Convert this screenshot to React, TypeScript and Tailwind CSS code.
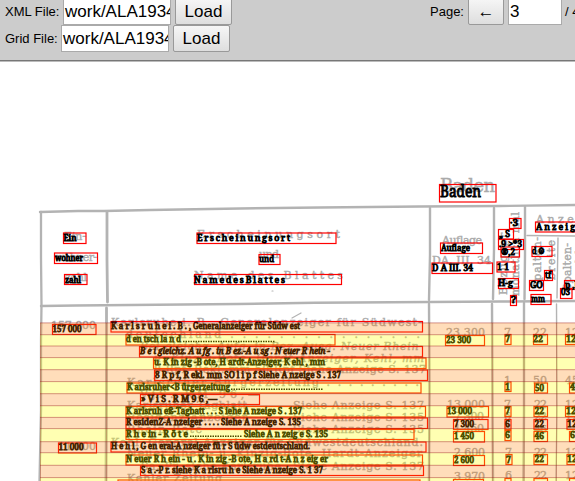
import React from 'react';

type Word = { t: string; x: number; y: number; w: number; box: [number, number, number, number]; s?: number; i?: boolean; spaced?: boolean };

// t: text, x/y: baseline start, w: text width, box: left, top, width, height
const words: Word[] = [
  { t: 'Baden', x: 440, y: 197, w: 41, s: 15.5, box: [439.5, 184.5, 56.5, 17.5] },
  { t: 'Ein', x: 63.5, y: 241, w: 13, box: [63.5, 233, 22.5, 10.5] },
  { t: 'wohner', x: 55, y: 261, w: 28, box: [54.5, 253, 43, 10.5] },
  { t: 'zahl', x: 65, y: 283, w: 16, box: [64.5, 274.5, 22.5, 10] },
  { t: 'Erscheinungsort', x: 197, y: 241, w: 93, spaced: true, box: [197, 233, 139, 10.5] },
  { t: 'und', x: 259, y: 262.5, w: 15, box: [259, 254.5, 21, 10] },
  { t: 'NamedesBlattes', x: 194, y: 283, w: 91, spaced: true, box: [194.5, 274.5, 147, 10] },
  { t: 'Auflage', x: 441, y: 251, w: 29, box: [440.5, 243, 42, 10.5] },
  { t: 'D A III. 34', x: 432, y: 271, w: 41, box: [432, 263, 60.5, 10.5] },
  { t: '·3', x: 510, y: 226, w: 8, box: [509.5, 218.5, 11.5, 10] },
  { t: '„ S', x: 499, y: 237, w: 11, box: [498.5, 229.5, 15, 9.5] },
  { t: '.9 >*3', x: 499, y: 247.5, w: 23, box: [498.5, 239.5, 25, 10] },
  { t: '®,2', x: 501, y: 255, w: 14, box: [501, 247, 18.5, 10] },
  { t: '1 1', x: 497, y: 270, w: 12, box: [497, 262, 18, 10] },
  { t: 'H-g', x: 498, y: 286, w: 15, box: [498.5, 278.5, 20, 10] },
  { t: '?', x: 511, y: 303.5, w: 5, box: [510.5, 295.5, 6, 10] },
  { t: 'Anzeig', x: 536, y: 230, w: 39, spaced: true, box: [535.5, 222, 50, 10] },
  { t: 'd ⚙', x: 532, y: 254.5, w: 13, box: [532, 246.5, 20, 10] },
  { t: 'tf', x: 545, y: 278.5, w: 6, box: [544.5, 270.5, 8, 10] },
  { t: 'GO', x: 530, y: 288.5, w: 13, box: [529.5, 280.5, 14, 10] },
  { t: 'mm', x: 531, y: 302.5, w: 14, box: [531, 294.5, 20, 10] },
  { t: 'p ,l', x: 565, y: 288.5, w: 12, box: [564.5, 280.5, 18, 9] },
  { t: '03', x: 561, y: 295.5, w: 9, box: [560.5, 288.5, 11.5, 10] },

  { t: '157 000', x: 52.5, y: 332, w: 29, box: [52.5, 324.5, 43.5, 10] },
  { t: 'K a r l s r u h e i . B . ,', x: 111, y: 329.5, w: 80, box: [111, 321.5, 311.5, 10.5] },
  { t: 'd en tsch la n d', x: 126, y: 342.5, w: 55, box: [126, 334.5, 209, 10.5] },
  { t: 'B e i gleichz. A u fg . in B ez.-A u sg . N euer R hein -', x: 140, y: 354.5, w: 190, i: true, box: [139.5, 346.5, 283, 10.5] },
  { t: 'u. K in zig -B ote, H ardt-Anzeiger, K ehl , mm', x: 154, y: 365.5, w: 171, box: [153.5, 358, 272.5, 10.5] },
  { t: '8 R p f, R ekl. mm SO l i p f Siehe A nzeige S . 137', x: 155, y: 378, w: 186, box: [154.5, 370, 273, 10.5] },
  { t: 'K arlsruher<B ürgerzeitung', x: 127, y: 390, w: 103, box: [127, 383, 294, 10] },
  { t: '» V i S . R M 9 6 ,—', x: 141, y: 402.5, w: 76, box: [140.5, 394.5, 119, 10] },
  { t: 'K arlsruh eß-Tagbatt . . . S iehe A nzeige S . 137', x: 126, y: 414, w: 176, box: [126, 406.5, 299.5, 10.5] },
  { t: 'R esidenZ-A nzeiger . . . . Siehe A nzeige S. 135', x: 126, y: 425, w: 175, box: [126, 418, 301.5, 10.5] },
  { t: 'R h e in - R ö t e', x: 126, y: 437, w: 62, box: [126, 429.5, 288, 10] },
  { t: 'H e h l , G en eral-A nzeiger fü r S üdw estdeutschland.', x: 111, y: 449.5, w: 199, box: [111, 442, 315, 10] },
  { t: '11 000', x: 58.5, y: 450.5, w: 25, box: [58.5, 443, 38, 10] },
  { t: 'N euer R h ein - u . K in zig -B ote, H a rd t-A n z eig er', x: 126, y: 462.5, w: 202, box: [126, 455, 296.5, 10] },
  { t: 'S a .-P r. siehe K a rlsru h e Siehe A nzeige S. 1 37', x: 141, y: 473.5, w: 182, box: [140.5, 466, 283, 9.5] },
  { t: '23 300', x: 446, y: 343, w: 25, box: [445.5, 335.5, 39, 10] },
  { t: '13 000', x: 447, y: 414.5, w: 25, box: [447, 406.5, 41.5, 10.5] },
  { t: '7 300', x: 454, y: 427, w: 20, box: [453.5, 419.5, 34.5, 10] },
  { t: '1 450', x: 454, y: 439.5, w: 20, box: [453.5, 431.5, 31, 10.5] },
  { t: '2 600', x: 454, y: 463.5, w: 20, box: [453.5, 455.5, 31, 10] },
  { t: '7', x: 505, y: 342.5, w: 5, box: [505, 334.5, 6, 10] },
  { t: '22', x: 533, y: 342.5, w: 10, box: [533.5, 334.5, 14, 10] },
  { t: '12', x: 566, y: 342.5, w: 10, box: [565.5, 334.5, 16, 10] },
  { t: '1', x: 505, y: 390, w: 5, box: [505, 382, 6, 9.5] },
  { t: '50', x: 535, y: 391, w: 9, box: [534.5, 383, 13, 10] },
  { t: '4', x: 570, y: 390.5, w: 5, box: [569.5, 383, 12, 10] },
  { t: '7', x: 505, y: 414, w: 5, box: [505, 406.5, 6, 10] },
  { t: '22', x: 534.5, y: 414.5, w: 9.5, box: [534, 406.5, 13.5, 10] },
  { t: '12', x: 566, y: 414.5, w: 10, box: [565.5, 406.5, 16, 10] },
  { t: '6', x: 505, y: 427, w: 5, box: [505, 419.5, 6, 10] },
  { t: '22', x: 534.5, y: 427, w: 9.5, box: [534, 419.5, 13.5, 10] },
  { t: '12', x: 567, y: 427, w: 10, box: [567, 419.5, 16, 10] },
  { t: '6', x: 505, y: 438, w: 5, box: [505, 430.5, 6, 10] },
  { t: '46', x: 534.5, y: 439.5, w: 9.5, box: [534, 431.5, 13.5, 10] },
  { t: '6', x: 570, y: 438.5, w: 5, box: [569.5, 431.5, 12, 10] },
  { t: '7', x: 506, y: 463, w: 5, box: [506, 454.5, 6, 10] },
  { t: '22', x: 534.5, y: 462.5, w: 9.5, box: [534, 454.5, 13.5, 10] },
  { t: '12', x: 567, y: 462.5, w: 10, box: [567, 454.5, 16, 10] },
];

// Boxes of the next row, clipped at the lower edge of the viewport
const edgeBoxes = [
  [118, 480, 302, 10], [453.5, 479.5, 30, 10], [505, 478.5, 6, 10], [534, 478.5, 13.5, 10], [569.5, 478.5, 12, 10],
];

type Ghost = [string, number, number, number, number?, boolean?];
const scan: Ghost[] = [
  ['Baden', 440, 192, 55, 18],
  ['Ein-', 64, 240, 22], ['wohner-', 55, 261, 42], ['zahl', 65, 281, 22],
  ['Erscheinungsort', 197, 238, 143], ['und', 259, 258, 20], ['Name des Blattes', 194, 279, 149],
  ['Auflage', 442, 244, 40], ['DA. III. 34', 432, 264, 59],
  ['Anzeigen', 536, 223, 76],
  ['157 000', 51, 329, 45], ['Karlsruhe i. B., Generalanzeiger für Südwest-', 111, 326, 311],
  ['deutschland . . . . . . . . . . . . . . . .', 126, 338, 294],
  ['Bei gleichz. Aufg. in Bez.-Ausg. Neuer Rhein-', 140, 350, 283, 11, true],
  ['u. Kinzig-Bote, Hardt-Anzeiger, Kehl, mm', 154, 362, 270, 11, true],
  ['8 Rpf, Rekl. mm 50 Rpf Siehe Anzeige S. 137', 154, 373, 272],
  ['Karlsruher Bürgerzeitung . . . . . . . . .', 127, 386, 292],
  ['VjS. RM 96,—', 140, 398, 119],
  ['Karlsruher Tagblatt', 127, 409, 120], ['Siehe Anzeige S. 137', 293, 409, 131],
  ['Residenz-Anzeiger', 127, 421, 120], ['Siehe Anzeige S. 135', 293, 421, 131],
  ['Rhein-Bote', 127, 433, 75], ['Siehe Anzeige S. 135', 293, 433, 131],
  ['Kehl, General-Anzeiger für Südwestdeutschland.', 111, 446, 312], ['11 000', 58, 450, 38],
  ['Neuer Rhein- u. Kinzig-Bote, Hardt-Anzeiger', 127, 457, 295],
  ['Sa.-Pr. siehe Karlsruhe', 141, 470, 140], ['Siehe Anzeige S. 137', 293, 470, 131],
  ['Kehler Zeitung', 127, 482, 95],
  ['23 300', 446, 336, 39], ['13 000', 447, 408, 38], ['7 300', 454, 420, 30], ['1 450', 454, 432, 30],
  ['2 600', 454, 456, 31], ['3 970', 454, 480, 31],
  ['7', 504, 336, 7], ['22', 533, 336, 14], ['12', 565, 336, 14],
  ['1', 504, 384, 7], ['50', 533, 384, 14], ['45', 565, 384, 14],
  ['7', 504, 408, 7], ['22', 534, 408, 13], ['12', 565, 408, 14],
  ['6', 504, 420, 7], ['22', 534, 420, 13], ['12', 565, 420, 14],
  ['6', 504, 433, 7], ['46', 534, 433, 13],
  ['7', 505, 456, 7], ['22', 534, 456, 13], ['12', 565, 456, 14],
  ['6', 505, 479, 7], ['22', 534, 479, 13], ['12', 565, 479, 14],
];

const verticalScan: Ghost[] = [
  ['Bezugspr.', 507, 295, 66], ['monatlich mal', 519, 296, 84],
  ['Spalten-', 541, 289, 52], ['breite', 555, 280, 40], ['Spalten-', 571, 291, 48], ['zahl', 583, 280, 30],
];

const bandEdges = [322.9, 334.7, 346, 357.6, 369.7, 381.6, 393.7, 405.7, 417.4, 428.6, 441.7, 452.7, 465.3, 477.6, 490];
const dots = [[183, 275, 341.5], [231, 323, 389.3], [190, 242, 436.3]];

function ScanText({ item, vertical }: { item: Ghost; vertical?: boolean }) {
  const [t, x, y, w, s = 11, it] = item;
  return (
    <text x={x} y={y} textLength={w} lengthAdjust="spacing" fontSize={s} fontStyle={it ? 'italic' : 'normal'}
      transform={vertical ? `rotate(-90 ${x} ${y})` : undefined}>{t}</text>
  );
}

function PageView() {
  return (
    <svg viewBox="0 62 575 419" className="block h-[419px] w-[575px]">
      <g className="fill-none stroke-[#b3b3b3]" strokeLinecap="round" strokeLinejoin="round">
        <path strokeWidth="2.4" d="M40 212L78 211L104 211L150 210L240 208.5L320 207.5L420 206.5L500 206L575 205" />
        <path strokeWidth="2.4" d="M41 306L76 305.5L130 305L238 304L315 302.8L430 302L500 301.5L575 301" />
        <path strokeWidth="2.3" d="M41 212L41 258L41.5 305L41 340L41 410L39.5 481" />
        <path strokeWidth="2.8" d="M107 212L107 260L107.5 302M106.5 308L106.5 390L106 481" />
        <path strokeWidth="2.4" d="M430 208L430 255L429 300M429 304L429.5 390L429 481" />
        <path strokeWidth="2.4" d="M494 208L494 250L493 299M492 304L492.5 410L493 481" />
        <path strokeWidth="2.4" d="M525 207L525 255L524.5 299M524 303L524 410L523.5 481" />
        <path strokeWidth="1.4" d="M527 235.5L575 236M558 238L557 298M556.5 304L557 410L556 481" />
        <path strokeWidth="1.2" d="M292 318L301 313M272 291h1" />
      </g>
      <g className="fill-[#aaa] stroke-[#aaa] font-['DejaVu_Serif',serif]" strokeWidth=".4">
        {scan.map((item, i) => <ScanText key={i} item={item} />)}
        {verticalScan.map((item, i) => <ScanText key={i} item={item} vertical />)}
      </g>
      <g className="fill-none stroke-[#ff0000]" strokeWidth="1.2">
        {words.map(({ box: b }, i) => <rect key={i} x={b[0]} y={b[1]} width={b[2]} height={b[3]} />)}
        {edgeBoxes.map((b, i) => <rect key={i} x={b[0]} y={b[1]} width={b[2]} height={b[3]} />)}
      </g>
      <g className="fill-black stroke-black font-['Noto_Serif','Liberation_Serif',serif]" strokeWidth=".9">
        {words.map((d, i) => (
          <text key={i} x={d.x} y={d.y - 0.4} textLength={d.w} lengthAdjust={d.spaced ? 'spacing' : 'spacingAndGlyphs'} fontSize={d.s ?? 8.8} fontStyle={d.i ? 'italic' : 'normal'}>{d.t}</text>
        ))}
        <text x="193" y="329.1" textLength="107" lengthAdjust="spacingAndGlyphs" fontSize="8.8">Generalanzeiger für Südw est</text>
        <text x="244" y="436.6" textLength="84" lengthAdjust="spacingAndGlyphs" fontSize="8.8">Siehe A n zeig e S. 135</text>
        {dots.map(([a, b, y], i) => <path key={i} className="fill-none" strokeWidth="1.5" strokeDasharray="1.5 1" d={`M${a} ${y}H${b}`} />)}
      </g>
      {bandEdges.slice(0, -1).map((y, i) => (
        <rect key={y} x="40" y={y} width="536" height={bandEdges[i + 1] - y} className={i % 2 ? 'fill-[#ffff00]/30' : 'fill-[#ff8000]/27'} />
      ))}
      <g className="stroke-[#a02020]/50" strokeWidth=".9">
        {bandEdges.map((y) => <path key={y} d={`M40 ${y}H575`} />)}
        {[40.5, 106.5, 429.5, 492.5, 524, 556.5].map((x) => <path key={x} strokeOpacity=".55" d={`M${x} 323V481`} />)}
      </g>
    </svg>
  );
}

const button = 'box-border shrink-0 rounded-[2px] border border-[#999] bg-linear-to-b from-[#f6f6f6] to-[#dedede] text-[17px] leading-none text-black';
const input = 'box-border shrink-0 overflow-hidden whitespace-nowrap border border-[#aaa] bg-white pl-px text-[17px] leading-[25px] text-black';

export default function App() {
  return (
    <main className="h-[481px] w-[575px] overflow-hidden bg-white font-['Liberation_Sans',Arial,sans-serif] text-[13px] text-black">
      <header className="flex h-[62px] flex-col overflow-hidden border-b border-[#bbb] bg-[#ccc]">
        <div className="flex h-[25px] shrink-0 items-end">
          <label className="w-[63px] shrink-0 pb-[4px] pl-[5px] whitespace-nowrap">XML File:</label>
          <div className={`${input} h-[27px] w-[108px]`}>work/ALA1934</div>
          <button className={`${button} ml-[4px] h-[27px] w-[57px]`}>Load</button>
          <label className="ml-[198px] w-[38px] shrink-0 pb-[4px] whitespace-nowrap">Page:</label>
          <button className={`${button} h-[27px] w-[36px]`}>←</button>
          <div className={`${input} ml-[4px] h-[27px] w-[54px]`}>3</div>
          <span className="ml-[3px] shrink-0 pb-[4px] whitespace-nowrap">/ 48</span>
        </div>
        <div className="flex h-[27px] shrink-0 items-end">
          <label className="w-[61px] shrink-0 pb-[4px] pl-[5px] whitespace-nowrap">Grid File:</label>
          <div className={`${input} h-[27px] w-[108px]`}>work/ALA1934</div>
          <button className={`${button} ml-[4px] h-[27px] w-[57px]`}>Load</button>
        </div>
        <div className="mt-[8px] h-px shrink-0 bg-[#777]" />
      </header>
      <PageView />
    </main>
  );
}
